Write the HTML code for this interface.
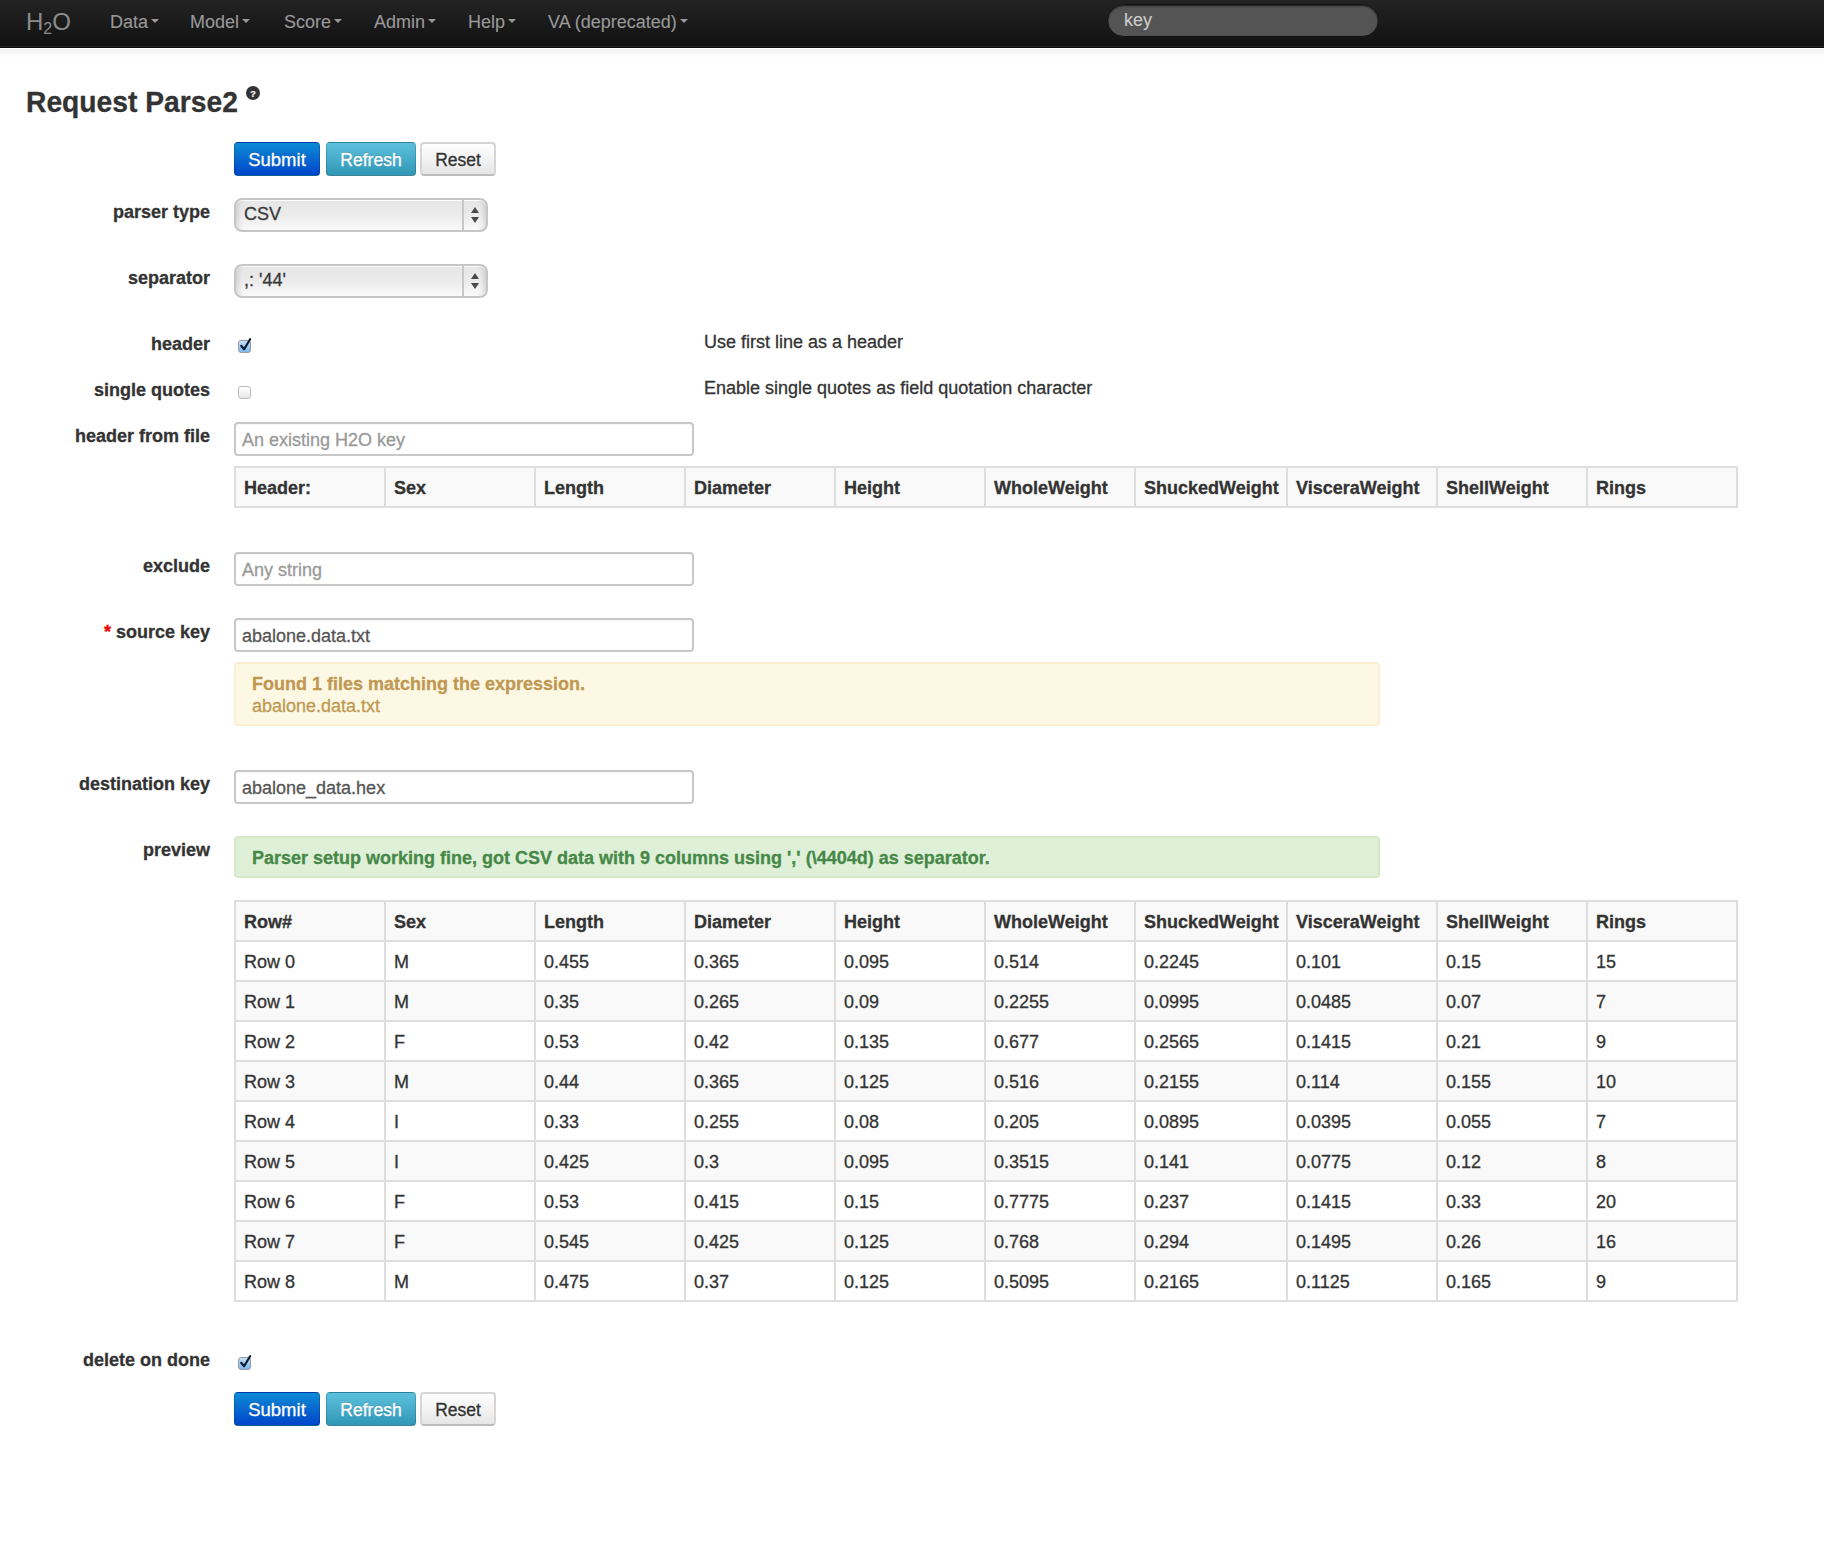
<!DOCTYPE html>
<html><head><meta charset="utf-8">
<style>
*{box-sizing:border-box}
html,body{margin:0;padding:0;background:#fff;width:1824px;height:1552px;overflow:hidden}
body{font-family:"Liberation Sans",sans-serif;color:#333;font-size:18px;line-height:20px;position:relative;-webkit-text-stroke:.3px}
.a{position:absolute;white-space:nowrap}
.nav{position:absolute;left:0;top:0;width:1824px;height:48px;background:linear-gradient(#232323,#111);border-bottom:1px solid #0c0c0c;box-shadow:0 -1px 0 #242424 inset}
.navsh{position:absolute;left:0;top:49px;width:1824px;height:9px;background:linear-gradient(rgba(0,0,0,.05),rgba(0,0,0,0))}
.brand{left:26px;top:7px;font-size:24px;line-height:30px;color:#8c8c8c;-webkit-text-stroke:0}
.brand sub{font-size:16px;vertical-align:baseline;position:relative;top:4px;margin:0}
.ni{top:12px;color:#999;-webkit-text-stroke:.1px}
.caret{display:inline-block;width:0;height:0;border-left:4px solid transparent;border-right:4px solid transparent;border-top:4px solid #999;vertical-align:top;margin-top:7px;margin-left:3px}
.search{position:absolute;left:1107px;top:4px;width:272px;height:33px;border-radius:17px;background:#545454;border:1px solid #121212;box-shadow:0 1px 2px rgba(0,0,0,.7) inset}
.search span{position:absolute;left:16px;top:5px;color:#cdcdcd;-webkit-text-stroke:.1px}
.title{left:25.5px;top:87px;font-size:30px;line-height:30px;font-weight:bold;transform:scaleX(.941);transform-origin:0 0}
.help{position:absolute;left:246px;top:86px;width:14px;height:14px;border-radius:50%;background:#333;color:#fff;font-size:9px;line-height:14px;text-align:center;font-weight:bold;padding-top:.5px;-webkit-text-stroke:.2px}
.btn{position:absolute;height:34px;border-radius:4px;font-size:17.5px;line-height:20px;text-align:center;padding-top:7px;border:1px solid rgba(0,0,0,.15);border-bottom-color:rgba(0,0,0,.3)}
.bp{background:linear-gradient(#0d8bd4,#0045cb);color:#fff;text-shadow:0 -1px 0 rgba(0,0,0,.25)}
.bi{background:linear-gradient(#5dc1de,#3097b5);color:#fff;text-shadow:0 -1px 0 rgba(0,0,0,.25)}
.bd{background:linear-gradient(#fff,#e6e6e6);color:#333;border:2px solid #d6d6d6;border-bottom-color:#bdbdbd;padding-top:6px}
.lbl{right:1614px;font-weight:bold;text-align:right}
.sel{position:absolute;left:234px;width:254px;height:34px;border:2px solid #c6c6c6;border-radius:8px;background:linear-gradient(#e6e6e6,#ebebeb 50%,#fafafa);box-shadow:inset 6px 0 5px -4px rgba(0,0,0,.13),inset -6px 0 5px -4px rgba(0,0,0,.13),inset 0 1px 0 #fff}
.sel .div{position:absolute;left:226px;top:0;width:2px;height:30px;background:#c8c8c8}
.sel .up{position:absolute;left:235px;top:7px;width:0;height:0;border-left:4px solid transparent;border-right:4px solid transparent;border-bottom:6px solid #4a4a4a}
.sel .dn{position:absolute;left:235px;top:17px;width:0;height:0;border-left:4px solid transparent;border-right:4px solid transparent;border-top:6px solid #4a4a4a}
.sel span{position:absolute;left:8px;top:4px;color:#393939}
.inp{position:absolute;left:234px;width:460px;height:34px;border:2px solid #c8c8c8;border-radius:4px;background:#fff;box-shadow:inset 0 1px 1px rgba(0,0,0,.03)}
.inp span{position:absolute;left:6px;top:6px;color:#555}
.inp span.ph{color:#999}
.cb{position:absolute;left:238px;width:13px;height:13px;border-radius:3px;border:1px solid #9a9aa6}
.ck{position:absolute;left:-1px;top:-4px}
.cb.on{background:linear-gradient(#c6e0f8,#7db9ef)}
.cb.off{border-color:#bbb;background:linear-gradient(#fff,#e8e8e8)}
.alert{position:absolute;left:234px;width:1146px;border-radius:4px;border:2px solid}
.warn{background:#fcf8e3;border-color:#fbeed5;color:#c09853}
.succ{background:#dff0d8;border-color:#d6e9c6;color:#468847}
.tb{position:absolute}
</style></head><body>
<div class="nav"></div><div class="navsh"></div>
<div class="a brand">H<sub>2</sub>O</div>
<div class="a ni" style="left:110px">Data<span class="caret"></span></div>
<div class="a ni" style="left:190px">Model<span class="caret"></span></div>
<div class="a ni" style="left:284px">Score<span class="caret"></span></div>
<div class="a ni" style="left:374px">Admin<span class="caret"></span></div>
<div class="a ni" style="left:468px">Help<span class="caret"></span></div>
<div class="a ni" style="left:548px">VA (deprecated)<span class="caret"></span></div>
<div class="search"><span>key</span></div>

<div class="a title">Request Parse2</div>
<div class="help">?</div>

<div class="btn bp" style="left:234px;top:142px;width:86px;font-size:18.5px">Submit</div>
<div class="btn bi" style="left:326px;top:142px;width:90px">Refresh</div>
<div class="btn bd" style="left:420px;top:142px;width:76px">Reset</div>

<div class="a lbl" style="top:202px">parser type</div>
<div class="sel" style="top:198px"><span>CSV</span><div class="div"></div><div class="up"></div><div class="dn"></div></div>

<div class="a lbl" style="top:268px">separator</div>
<div class="sel" style="top:264px"><span>,: '44'</span><div class="div"></div><div class="up"></div><div class="dn"></div></div>

<div class="a lbl" style="top:334px">header</div>
<div class="cb on" style="top:340px"><svg class="ck" width="16" height="18" viewBox="0 0 16 18"><path d="M3.2 8.8 L6.1 12.2 L12.1 2.2" fill="none" stroke="#0b1a33" stroke-width="2.2" stroke-linecap="round" stroke-linejoin="round"/></svg></div>
<div class="a" style="left:704px;top:332px">Use first line as a header</div>

<div class="a lbl" style="top:380px">single quotes</div>
<div class="cb off" style="top:386px"></div>
<div class="a" style="left:704px;top:378px">Enable single quotes as field quotation character</div>

<div class="a lbl" style="top:426px">header from file</div>
<div class="inp" style="top:422px"><span class="ph">An existing H2O key</span></div>

<div class="tb" style="left:234px;top:466px;width:1504px;height:42px;background:#f9f9f9"></div>
<div class="tb" style="left:234px;top:466px;width:1504px;height:2px;background:#ddd"></div>
<div class="tb" style="left:234px;top:506px;width:1504px;height:2px;background:#ddd"></div>
<div class="tb" style="left:234px;top:466px;width:2px;height:42px;background:#ddd"></div>
<div class="tb" style="left:384px;top:466px;width:2px;height:42px;background:#ddd"></div>
<div class="tb" style="left:534px;top:466px;width:2px;height:42px;background:#ddd"></div>
<div class="tb" style="left:684px;top:466px;width:2px;height:42px;background:#ddd"></div>
<div class="tb" style="left:834px;top:466px;width:2px;height:42px;background:#ddd"></div>
<div class="tb" style="left:984px;top:466px;width:2px;height:42px;background:#ddd"></div>
<div class="tb" style="left:1134px;top:466px;width:2px;height:42px;background:#ddd"></div>
<div class="tb" style="left:1286px;top:466px;width:2px;height:42px;background:#ddd"></div>
<div class="tb" style="left:1436px;top:466px;width:2px;height:42px;background:#ddd"></div>
<div class="tb" style="left:1586px;top:466px;width:2px;height:42px;background:#ddd"></div>
<div class="tb" style="left:1736px;top:466px;width:2px;height:42px;background:#ddd"></div>
<div class="a" style="left:244px;top:478px;font-weight:bold">Header:</div>
<div class="a" style="left:394px;top:478px;font-weight:bold">Sex</div>
<div class="a" style="left:544px;top:478px;font-weight:bold">Length</div>
<div class="a" style="left:694px;top:478px;font-weight:bold">Diameter</div>
<div class="a" style="left:844px;top:478px;font-weight:bold">Height</div>
<div class="a" style="left:994px;top:478px;font-weight:bold">WholeWeight</div>
<div class="a" style="left:1144px;top:478px;font-weight:bold">ShuckedWeight</div>
<div class="a" style="left:1296px;top:478px;font-weight:bold">VisceraWeight</div>
<div class="a" style="left:1446px;top:478px;font-weight:bold">ShellWeight</div>
<div class="a" style="left:1596px;top:478px;font-weight:bold">Rings</div>

<div class="a lbl" style="top:556px">exclude</div>
<div class="inp" style="top:552px"><span class="ph">Any string</span></div>

<div class="a lbl" style="top:622px"><span style="color:#e00">*</span> source key</div>
<div class="inp" style="top:618px"><span>abalone.data.txt</span></div>

<div class="alert warn" style="top:662px;height:64px">
<div class="a" style="left:16px;top:10px;font-weight:bold">Found 1 files matching the expression.</div>
<div class="a" style="left:16px;top:32px">abalone.data.txt</div>
</div>

<div class="a lbl" style="top:774px">destination key</div>
<div class="inp" style="top:770px"><span>abalone_data.hex</span></div>

<div class="a lbl" style="top:840px">preview</div>
<div class="alert succ" style="top:836px;height:42px">
<div class="a" style="left:16px;top:10px;font-weight:bold">Parser setup working fine, got CSV data with 9 columns using ',' (\4404d) as separator.</div>
</div>

<div class="tb" style="left:234px;top:900px;width:1504px;height:42px;background:#f9f9f9"></div>
<div class="tb" style="left:234px;top:980px;width:1504px;height:42px;background:#f9f9f9"></div>
<div class="tb" style="left:234px;top:1060px;width:1504px;height:42px;background:#f9f9f9"></div>
<div class="tb" style="left:234px;top:1140px;width:1504px;height:42px;background:#f9f9f9"></div>
<div class="tb" style="left:234px;top:1220px;width:1504px;height:42px;background:#f9f9f9"></div>
<div class="tb" style="left:234px;top:900px;width:1504px;height:2px;background:#ddd"></div>
<div class="tb" style="left:234px;top:940px;width:1504px;height:2px;background:#ddd"></div>
<div class="tb" style="left:234px;top:980px;width:1504px;height:2px;background:#ddd"></div>
<div class="tb" style="left:234px;top:1020px;width:1504px;height:2px;background:#ddd"></div>
<div class="tb" style="left:234px;top:1060px;width:1504px;height:2px;background:#ddd"></div>
<div class="tb" style="left:234px;top:1100px;width:1504px;height:2px;background:#ddd"></div>
<div class="tb" style="left:234px;top:1140px;width:1504px;height:2px;background:#ddd"></div>
<div class="tb" style="left:234px;top:1180px;width:1504px;height:2px;background:#ddd"></div>
<div class="tb" style="left:234px;top:1220px;width:1504px;height:2px;background:#ddd"></div>
<div class="tb" style="left:234px;top:1260px;width:1504px;height:2px;background:#ddd"></div>
<div class="tb" style="left:234px;top:1300px;width:1504px;height:2px;background:#ddd"></div>
<div class="tb" style="left:234px;top:900px;width:2px;height:402px;background:#ddd"></div>
<div class="tb" style="left:384px;top:900px;width:2px;height:402px;background:#ddd"></div>
<div class="tb" style="left:534px;top:900px;width:2px;height:402px;background:#ddd"></div>
<div class="tb" style="left:684px;top:900px;width:2px;height:402px;background:#ddd"></div>
<div class="tb" style="left:834px;top:900px;width:2px;height:402px;background:#ddd"></div>
<div class="tb" style="left:984px;top:900px;width:2px;height:402px;background:#ddd"></div>
<div class="tb" style="left:1134px;top:900px;width:2px;height:402px;background:#ddd"></div>
<div class="tb" style="left:1286px;top:900px;width:2px;height:402px;background:#ddd"></div>
<div class="tb" style="left:1436px;top:900px;width:2px;height:402px;background:#ddd"></div>
<div class="tb" style="left:1586px;top:900px;width:2px;height:402px;background:#ddd"></div>
<div class="tb" style="left:1736px;top:900px;width:2px;height:402px;background:#ddd"></div>
<div class="a" style="left:244px;top:912px;font-weight:bold">Row#</div>
<div class="a" style="left:394px;top:912px;font-weight:bold">Sex</div>
<div class="a" style="left:544px;top:912px;font-weight:bold">Length</div>
<div class="a" style="left:694px;top:912px;font-weight:bold">Diameter</div>
<div class="a" style="left:844px;top:912px;font-weight:bold">Height</div>
<div class="a" style="left:994px;top:912px;font-weight:bold">WholeWeight</div>
<div class="a" style="left:1144px;top:912px;font-weight:bold">ShuckedWeight</div>
<div class="a" style="left:1296px;top:912px;font-weight:bold">VisceraWeight</div>
<div class="a" style="left:1446px;top:912px;font-weight:bold">ShellWeight</div>
<div class="a" style="left:1596px;top:912px;font-weight:bold">Rings</div>
<div class="a" style="left:244px;top:952px">Row 0</div>
<div class="a" style="left:394px;top:952px">M</div>
<div class="a" style="left:544px;top:952px">0.455</div>
<div class="a" style="left:694px;top:952px">0.365</div>
<div class="a" style="left:844px;top:952px">0.095</div>
<div class="a" style="left:994px;top:952px">0.514</div>
<div class="a" style="left:1144px;top:952px">0.2245</div>
<div class="a" style="left:1296px;top:952px">0.101</div>
<div class="a" style="left:1446px;top:952px">0.15</div>
<div class="a" style="left:1596px;top:952px">15</div>
<div class="a" style="left:244px;top:992px">Row 1</div>
<div class="a" style="left:394px;top:992px">M</div>
<div class="a" style="left:544px;top:992px">0.35</div>
<div class="a" style="left:694px;top:992px">0.265</div>
<div class="a" style="left:844px;top:992px">0.09</div>
<div class="a" style="left:994px;top:992px">0.2255</div>
<div class="a" style="left:1144px;top:992px">0.0995</div>
<div class="a" style="left:1296px;top:992px">0.0485</div>
<div class="a" style="left:1446px;top:992px">0.07</div>
<div class="a" style="left:1596px;top:992px">7</div>
<div class="a" style="left:244px;top:1032px">Row 2</div>
<div class="a" style="left:394px;top:1032px">F</div>
<div class="a" style="left:544px;top:1032px">0.53</div>
<div class="a" style="left:694px;top:1032px">0.42</div>
<div class="a" style="left:844px;top:1032px">0.135</div>
<div class="a" style="left:994px;top:1032px">0.677</div>
<div class="a" style="left:1144px;top:1032px">0.2565</div>
<div class="a" style="left:1296px;top:1032px">0.1415</div>
<div class="a" style="left:1446px;top:1032px">0.21</div>
<div class="a" style="left:1596px;top:1032px">9</div>
<div class="a" style="left:244px;top:1072px">Row 3</div>
<div class="a" style="left:394px;top:1072px">M</div>
<div class="a" style="left:544px;top:1072px">0.44</div>
<div class="a" style="left:694px;top:1072px">0.365</div>
<div class="a" style="left:844px;top:1072px">0.125</div>
<div class="a" style="left:994px;top:1072px">0.516</div>
<div class="a" style="left:1144px;top:1072px">0.2155</div>
<div class="a" style="left:1296px;top:1072px">0.114</div>
<div class="a" style="left:1446px;top:1072px">0.155</div>
<div class="a" style="left:1596px;top:1072px">10</div>
<div class="a" style="left:244px;top:1112px">Row 4</div>
<div class="a" style="left:394px;top:1112px">I</div>
<div class="a" style="left:544px;top:1112px">0.33</div>
<div class="a" style="left:694px;top:1112px">0.255</div>
<div class="a" style="left:844px;top:1112px">0.08</div>
<div class="a" style="left:994px;top:1112px">0.205</div>
<div class="a" style="left:1144px;top:1112px">0.0895</div>
<div class="a" style="left:1296px;top:1112px">0.0395</div>
<div class="a" style="left:1446px;top:1112px">0.055</div>
<div class="a" style="left:1596px;top:1112px">7</div>
<div class="a" style="left:244px;top:1152px">Row 5</div>
<div class="a" style="left:394px;top:1152px">I</div>
<div class="a" style="left:544px;top:1152px">0.425</div>
<div class="a" style="left:694px;top:1152px">0.3</div>
<div class="a" style="left:844px;top:1152px">0.095</div>
<div class="a" style="left:994px;top:1152px">0.3515</div>
<div class="a" style="left:1144px;top:1152px">0.141</div>
<div class="a" style="left:1296px;top:1152px">0.0775</div>
<div class="a" style="left:1446px;top:1152px">0.12</div>
<div class="a" style="left:1596px;top:1152px">8</div>
<div class="a" style="left:244px;top:1192px">Row 6</div>
<div class="a" style="left:394px;top:1192px">F</div>
<div class="a" style="left:544px;top:1192px">0.53</div>
<div class="a" style="left:694px;top:1192px">0.415</div>
<div class="a" style="left:844px;top:1192px">0.15</div>
<div class="a" style="left:994px;top:1192px">0.7775</div>
<div class="a" style="left:1144px;top:1192px">0.237</div>
<div class="a" style="left:1296px;top:1192px">0.1415</div>
<div class="a" style="left:1446px;top:1192px">0.33</div>
<div class="a" style="left:1596px;top:1192px">20</div>
<div class="a" style="left:244px;top:1232px">Row 7</div>
<div class="a" style="left:394px;top:1232px">F</div>
<div class="a" style="left:544px;top:1232px">0.545</div>
<div class="a" style="left:694px;top:1232px">0.425</div>
<div class="a" style="left:844px;top:1232px">0.125</div>
<div class="a" style="left:994px;top:1232px">0.768</div>
<div class="a" style="left:1144px;top:1232px">0.294</div>
<div class="a" style="left:1296px;top:1232px">0.1495</div>
<div class="a" style="left:1446px;top:1232px">0.26</div>
<div class="a" style="left:1596px;top:1232px">16</div>
<div class="a" style="left:244px;top:1272px">Row 8</div>
<div class="a" style="left:394px;top:1272px">M</div>
<div class="a" style="left:544px;top:1272px">0.475</div>
<div class="a" style="left:694px;top:1272px">0.37</div>
<div class="a" style="left:844px;top:1272px">0.125</div>
<div class="a" style="left:994px;top:1272px">0.5095</div>
<div class="a" style="left:1144px;top:1272px">0.2165</div>
<div class="a" style="left:1296px;top:1272px">0.1125</div>
<div class="a" style="left:1446px;top:1272px">0.165</div>
<div class="a" style="left:1596px;top:1272px">9</div>

<div class="a lbl" style="top:1350px">delete on done</div>
<div class="cb on" style="top:1357px"><svg class="ck" width="16" height="18" viewBox="0 0 16 18"><path d="M3.2 8.8 L6.1 12.2 L12.1 2.2" fill="none" stroke="#0b1a33" stroke-width="2.2" stroke-linecap="round" stroke-linejoin="round"/></svg></div>

<div class="btn bp" style="left:234px;top:1392px;width:86px;font-size:18.5px">Submit</div>
<div class="btn bi" style="left:326px;top:1392px;width:90px">Refresh</div>
<div class="btn bd" style="left:420px;top:1392px;width:76px">Reset</div>
</body></html>
